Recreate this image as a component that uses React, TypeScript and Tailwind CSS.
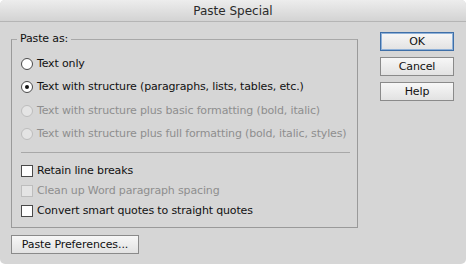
const font = { fontFamily: '"DejaVu Sans", "Lucida Grande", sans-serif' };

function Radio({ checked, disabled, label }: { checked?: boolean; disabled?: boolean; label: string }) {
  return (
    <div className={`flex items-center h-[23.5px] whitespace-nowrap ${disabled ? "text-[#8e8e8e]" : "text-[#111]"}`}>
      <span
        className={`w-[12px] h-[12px] shrink-0 rounded-full border flex items-center justify-center ${
          disabled ? "border-[#bdbdbd] bg-[#e4e4e4]" : "border-[#4a4a4a] bg-white"
        }`}
      >
        {checked && <span className="w-[4px] h-[4px] rounded-full bg-[#111]" />}
      </span>
      <span className="ml-[4px]">{label}</span>
    </div>
  );
}

function Check({ disabled, label }: { disabled?: boolean; label: string }) {
  return (
    <div className={`flex items-center h-[20px] whitespace-nowrap ${disabled ? "text-[#8e8e8e]" : "text-[#111]"}`}>
      <span
        className={`w-[12px] h-[12px] shrink-0 border ${disabled ? "border-[#bdbdbd] bg-[#e4e4e4]" : "border-[#4a4a4a] bg-white"}`}
      />
      <span className="ml-[4px]">{label}</span>
    </div>
  );
}

function Button({ label, primary, className = "" }: { label: string; primary?: boolean; className?: string }) {
  return (
    <button
      className={`h-[19px] border text-[11px] tracking-[-0.1px] text-[#111] leading-none bg-gradient-to-b from-[#f7f7f7] to-[#e2e2e2] ${
        primary ? "border-[#3e6fa8] shadow-[inset_0_0_0_1px_#8fb1d8]" : "border-[#8a8a8a]"
      } ${className}`}
    >
      {label}
    </button>
  );
}

export default function App() {
  return (
    <div className="w-[466px] h-[264px] bg-[#d6d6d6] rounded-[5px] overflow-hidden flex flex-col" style={font}>
      <div className="h-[22px] shrink-0 flex items-center justify-center border-b border-[#b5b5b5] bg-gradient-to-b from-[#ededed] to-[#d3d3d3] text-[12px] text-[#2a2a2a]">
        Paste Special
      </div>
      <div className="flex pl-[11px] pt-[17px]">
        <div className="flex flex-col">
          <div className="relative w-[347px] h-[189px] border border-[#9a9a9a] border-t-[#a8a8a8] text-[11px] tracking-[-0.15px]">
            <span className="absolute -top-[9px] left-[5px] px-[3px] bg-[#d6d6d6] text-[#111] leading-[16px]">
              Paste as:
            </span>
            <div className="pl-[9px] pt-[12px]">
              <Radio label="Text only" />
              <Radio checked label="Text with structure (paragraphs, lists, tables, etc.)" />
              <Radio disabled label="Text with structure plus basic formatting (bold, italic)" />
              <Radio disabled label="Text with structure plus full formatting (bold, italic, styles)" />
              <div className="h-px bg-[#a8a8a8] mr-[7px] mt-[6px] mb-[8px]" />
              <Check label="Retain line breaks" />
              <Check disabled label="Clean up Word paragraph spacing" />
              <Check label="Convert smart quotes to straight quotes" />
            </div>
          </div>
          <Button label="Paste Preferences..." className="w-[128px] mt-[7px]" />
        </div>
        <div className="flex flex-col gap-[6px] ml-[22px] -mt-[7px]">
          <Button primary label="OK" className="w-[74px]" />
          <Button label="Cancel" className="w-[74px]" />
          <Button label="Help" className="w-[74px]" />
        </div>
      </div>
    </div>
  );
}
